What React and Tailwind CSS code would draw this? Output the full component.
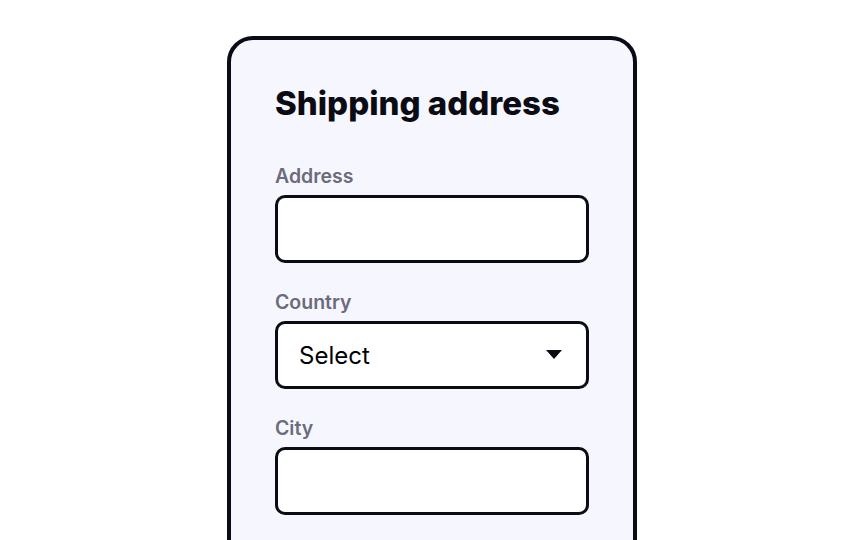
export default function App() {
  return (
    <div className="min-h-screen bg-white flex justify-center pt-9 overflow-hidden" style={{ height: 540 }}>
      <div className="w-[410px] h-[560px] shrink-0 border-4 border-[#0b0b14] rounded-[26px] bg-[#f6f6ff] px-[44px] pt-[45px] font-['Inter',sans-serif]">
        <h1 className="text-[33px] leading-9 font-extrabold text-[#0b0b14]">Shipping address</h1>

        <div className="mt-[42px] flex flex-col gap-[26px]">
          <div>
            <label className="block text-[19.5px] leading-[26px] font-semibold text-[#6b6b7b] mb-[6px]">Address</label>
            <div className="h-[68px] bg-white border-[3px] border-[#0b0b14] rounded-[10px]"></div>
          </div>

          <div>
            <label className="block text-[19.5px] leading-[26px] font-semibold text-[#6b6b7b] mb-[6px]">Country</label>
            <div className="h-[68px] bg-white border-[3px] border-[#0b0b14] rounded-[10px] flex items-center justify-between pl-[21px] pr-[24px]">
              <span className="text-[24px] text-black pt-[2px]">Select</span>
              <svg width="16" height="10" viewBox="0 0 16 10">
                <path d="M0 0 H16 L8 9 Z" fill="#0b0b14" />
              </svg>
            </div>
          </div>

          <div>
            <label className="block text-[19.5px] leading-[26px] font-semibold text-[#6b6b7b] mb-[6px]">City</label>
            <div className="h-[68px] bg-white border-[3px] border-[#0b0b14] rounded-[10px]"></div>
          </div>
        </div>
      </div>
    </div>
  );
}
